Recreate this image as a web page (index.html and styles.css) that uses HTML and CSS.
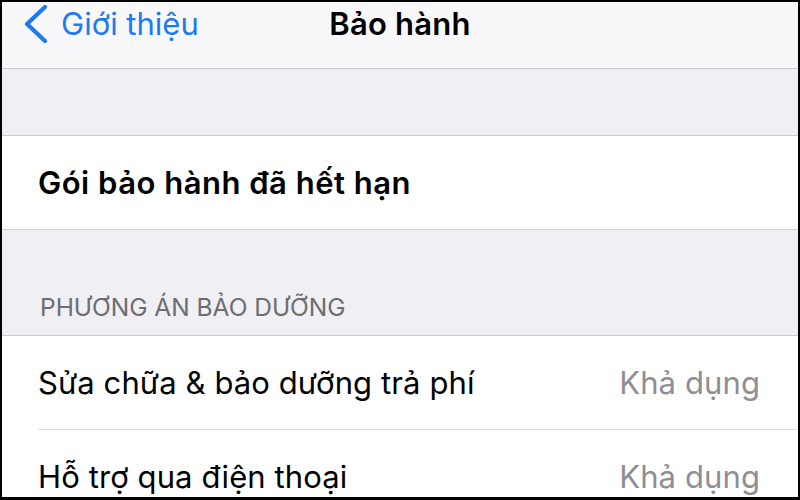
FILE: index.html
```html
<!DOCTYPE html>
<html lang="vi">
<head>
  <meta charset="UTF-8">
  <meta name="viewport" content="width=device-width, initial-scale=1.0">
  <title>Bảo hành</title>
  <link rel="stylesheet" href="styles.css">
</head>
<body>
  <div class="screen">
    <!-- Navigation bar -->
    <header class="nav">
      <a class="nav-back" href="#">
        <svg class="chevron" width="26" height="40" viewBox="0 0 26 40">
          <path d="M22 3 L4 20 L22 37" fill="none" stroke="currentColor" stroke-width="4.2" stroke-linecap="round" stroke-linejoin="round"/>
        </svg>
        <span>Giới thiệu</span>
      </a>
      <h1 class="nav-title">Bảo hành</h1>
      <div></div>
    </header>

    <div class="spacer"></div>

    <div class="group">
      <div class="row row-strong">Gói bảo hành đã hết hạn</div>
    </div>

    <div class="section-header">Phương án bảo dưỡng</div>

    <div class="group">
      <div class="row">
        <span>Sửa chữa &amp; bảo dưỡng trả phí</span>
        <span class="row-value">Khả dụng</span>
      </div>
      <div class="row">
        <span>Hỗ trợ qua điện thoại</span>
        <span class="row-value">Khả dụng</span>
      </div>
    </div>
  </div>
</body>
</html>
```

FILE: styles.css
```css
html, body {
  margin: 0;
  height: 100%;
}
body {
  background-color: #000; /* black frame round the capture */
  font-family: Inter, "Noto Sans", sans-serif;
  overflow: hidden;
}
.screen {
  margin: 2px 2px 0 2px;
  height: 495px;
  background-color: #efeff4;
  overflow: hidden;
}

/* Nav bar */
.nav {
  display: grid;
  grid-template-columns: 1fr auto 1fr;
  align-items: center;
  height: 65px;
  padding-bottom: 1px;
  background-color: #f8f8fa;
  border-bottom: 1px solid #c9c9ce;
}
.nav-back {
  display: flex;
  align-items: center;
  gap: 12px;
  padding-left: 21px;
  margin-top: -22px;
  color: #1d7bf0;
  text-decoration: none;
  font-size: 31px;
}
.nav-title {
  margin: -22px 0 0 0;
  font-size: 31px;
  font-weight: 600;
  letter-spacing: 0.2px;
  color: #000;
}

.spacer {
  height: 66px;
  border-bottom: 1px solid #c9c9ce;
}

/* Table groups */
.group {
  background-color: #fff;
  border-bottom: 1px solid #d0d0d4;
}
.row {
  display: flex;
  justify-content: space-between;
  align-items: center;
  height: 93px;
  margin-left: 36px;
  padding-right: 38px;
  font-size: 31px;
  letter-spacing: 0.1px;
  color: #000;
  border-bottom: 1px solid #dcdce0;
}
.row:last-child {
  border-bottom: none;
}
.row-strong {
  font-weight: 600;
  letter-spacing: 0.5px;
}
.row-value {
  color: #8e8e93;
}

.section-header {
  height: 106px;
  box-sizing: border-box;
  padding: 62px 0 0 38px;
  font-size: 24.5px;
  text-transform: uppercase;
  color: #6d6d72;
  border-bottom: 1px solid #c9c9ce;
}
```
